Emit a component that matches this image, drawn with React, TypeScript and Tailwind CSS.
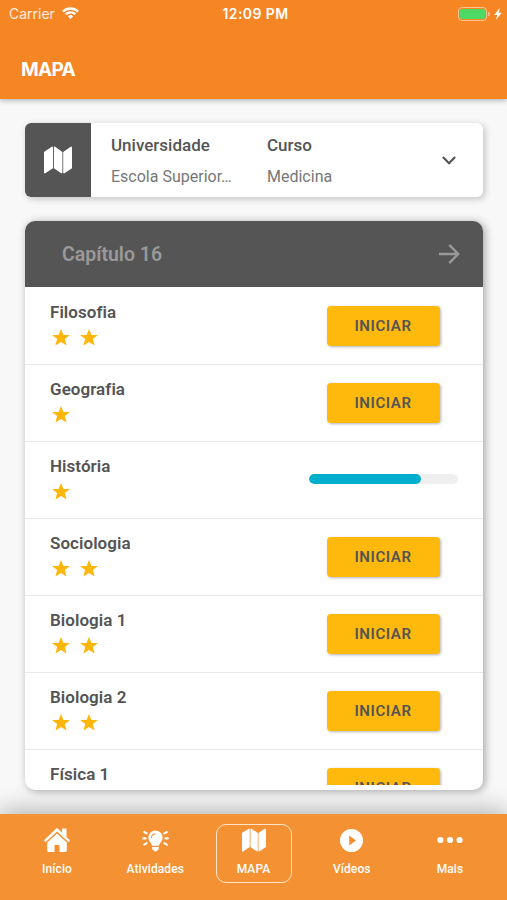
import React, { useState } from 'react';
import clsx from 'clsx';

interface Subject {
  name: string;
  stars: number;
  progress?: number;
}

const subjects: Subject[] = [
  { name: 'Filosofia', stars: 2 },
  { name: 'Geografia', stars: 1 },
  { name: 'História', stars: 1, progress: 75 },
  { name: 'Sociologia', stars: 2 },
  { name: 'Biologia 1', stars: 2 },
  { name: 'Biologia 2', stars: 2 },
  { name: 'Física 1', stars: 2 },
];

type IconProps = { className?: string };

const WifiIcon = ({ className }: IconProps) => (
  <svg viewBox="0 0 17 12" className={className} fill="none" stroke="currentColor" strokeWidth="2.3">
    <path d="M1 4.6a10.6 10.6 0 0 1 15 0" />
    <path d="M3.7 7.3a6.8 6.8 0 0 1 9.6 0" />
    <path d="M8.5 12 5.9 9.4a3.7 3.7 0 0 1 5.2 0z" fill="currentColor" stroke="none" />
  </svg>
);

const BoltIcon = ({ className }: IconProps) => (
  <svg viewBox="0 0 8 12" className={className} fill="currentColor">
    <path d="M5.8 0 0.2 7h3L2 12 7.8 4.8h-3z" />
  </svg>
);

const MapIcon = ({ className }: IconProps) => (
  <svg viewBox="0 0 28 28" className={className} fill="currentColor" stroke="currentColor" strokeWidth="1.6" strokeLinejoin="round">
    <path d="M.8 6.3 8.2 1.4v20.4L.8 26.6z" />
    <path d="m10.7 1.4 6.9 4.9v20.3l-6.9-4.8z" />
    <path d="M20 6.3 27.2 1.4v20.4L20 26.6z" />
  </svg>
);

const StarIcon = ({ className }: IconProps) => (
  <svg viewBox="0 0 18 17" className={className} fill="currentColor">
    <path d="m9 0 2.45 6H18l-5.2 4.1L14.6 16.6 9 13l-5.6 3.6 1.8-6.5L0 6h6.55z" />
  </svg>
);

const HomeIcon = ({ className }: IconProps) => (
  <svg viewBox="0 0 26 24" className={className} fill="currentColor">
    <path d="M13 5.6 3.2 14.6v8c0 .8.5 1.3 1.3 1.3h6v-7h5v7h6c.8 0 1.3-.5 1.3-1.3v-8z" />
    <path d="m25.7 12-3.2-3V1.2c0-.5-.2-.7-.7-.7h-3c-.5 0-.7.2-.7.7v3.6L14.4.9a2 2 0 0 0-2.8 0L.3 12c-.3.2-.3.5-.1.7l.9 1c.2.3.5.3.8 0L13 3.5l11.1 10.2c.3.3.6.3.8 0l.9-1c.2-.2.2-.5-.1-.7z" />
  </svg>
);

const BulbIcon = ({ className }: IconProps) => (
  <svg viewBox="0 0 28 24" className={className}>
    <path
      d="M14 1.6a7.4 7.4 0 0 0-7.4 7.4c0 3.9 3.4 5.4 3.8 8.6h7.2c.4-3.2 3.8-4.7 3.8-8.6A7.4 7.4 0 0 0 14 1.6z"
      fill="currentColor"
    />
    <path d="M10.5 18.7h7v1.7c0 1-.6 1.7-1.5 1.9l-.7 1h-2.6l-.7-1c-.9-.2-1.5-.9-1.5-1.9z" fill="currentColor" />
    <path d="M9.8 8.8a4 4 0 0 1 3.7-3.6" fill="none" stroke="#f49132" strokeWidth="1.2" strokeLinecap="round" />
    <g fill="none" stroke="currentColor" strokeWidth="2.2" strokeLinecap="round">
      <path d="m2.2 3.1 2.6 1.4M1.2 9.8h2.5M2.2 16.3l2.6-1.5M25.8 3.1l-2.6 1.4M26.8 9.8h-2.5M25.8 16.3l-2.6-1.5" />
    </g>
  </svg>
);

const PlayIcon = ({ className }: IconProps) => (
  <svg viewBox="0 0 22 22" className={className} fill="currentColor">
    <path fillRule="evenodd" d="M11 0a11 11 0 1 0 0 22 11 11 0 0 0 0-22zM8.8 6.2v9.6l6.6-4.8z" />
  </svg>
);

const DotsIcon = ({ className }: IconProps) => (
  <svg viewBox="0 0 26 8" className={className} fill="currentColor">
    <circle cx="3.4" cy="4" r="3.1" />
    <circle cx="13" cy="4" r="3.1" />
    <circle cx="22.6" cy="4" r="3.1" />
  </svg>
);

const tabs = [
  { label: 'Início', icon: <HomeIcon className="h-6 w-[26px]" /> },
  { label: 'Atividades', icon: <BulbIcon className="h-[23px] w-[27px]" /> },
  { label: 'MAPA', icon: <MapIcon className="size-6" /> },
  { label: 'Vídeos', icon: <PlayIcon className="size-[23px]" /> },
  { label: 'Mais', icon: <DotsIcon className="h-2 w-[26px]" /> },
];

const StatusBar = () => (
  <div className="grid h-[27px] grid-cols-3 items-center pl-[9px] pr-[5px] font-[Inter] text-[14px] text-white">
    <div className="flex items-center gap-[7px] text-white/85">
      <span>Carrier</span>
      <WifiIcon className="mb-px h-3 w-[17px] text-white" />
    </div>
    <span className="text-center font-semibold tracking-[0.4px] whitespace-nowrap">12:09 PM</span>
    <div className="flex items-center justify-end">
      <div className="h-[14px] w-[29px] rounded-[4px] border border-white/50 p-px">
        <div className="h-full rounded-[2px] bg-[#4cd964]" />
      </div>
      <div className="ml-px h-1 w-[2px] rounded-r bg-white/50" />
      <BoltIcon className="ml-1 h-3 w-2" />
    </div>
  </div>
);

const SubjectRow = ({ subject }: { subject: Subject }) => (
  <li className="flex h-[77px] items-start justify-between border-b border-[#e8e8e8] pl-[25px]">
    <div className="pt-[12px]">
      <h3 className="text-[17px] leading-6 font-semibold tracking-[0.05px]">{subject.name}</h3>
      <div className="mt-[5px] flex gap-[10px] pl-[2px] text-[#ffb60a]">
        {Array.from({ length: subject.stars }, (_, i) => (
          <StarIcon key={i} className="h-[17px] w-[18px]" />
        ))}
      </div>
    </div>
    {subject.progress !== undefined ? (
      <div className="mt-[32px] mr-[25px] h-[10px] w-[149px] overflow-hidden rounded-full bg-[#efefef]">
        <div className="h-full rounded-full bg-[#00aecd]" style={{ width: `${subject.progress}%` }} />
      </div>
    ) : (
      <button className="mt-[18px] mr-[43px] h-10 w-[113px] rounded-[4px] bg-[#ffb90c] pr-px text-[15px] font-semibold tracking-[0.6px] shadow-[1px_1px_3px_rgba(0,0,0,0.3)]">
        INICIAR
      </button>
    )}
  </li>
);

const App: React.FC = () => {
  const [activeTab, setActiveTab] = useState('MAPA');

  return (
    <div className="flex h-[900px] w-[507px] flex-col overflow-hidden bg-[#f8f8f8] font-[Roboto,sans-serif] text-[#545454]">
      <header className="h-[98.5px] shrink-0 bg-[#f68524] shadow-[0_2px_5px_rgba(0,0,0,0.25)]">
        <StatusBar />
        <h1 className="pt-[29px] pl-[21px] font-[Inter] text-[19px] leading-7 font-bold tracking-[-0.7px] text-white">MAPA</h1>
      </header>

      <main className="flex flex-1 flex-col gap-6 pt-[24.5px] pr-6 pb-6 pl-[25px]">
        <section className="flex h-[74px] shrink-0 overflow-hidden rounded-[6px] bg-white shadow-[2px_2px_7px_rgba(0,0,0,0.22)]">
          <div className="flex w-[66px] items-center justify-center bg-[#555] text-white">
            <MapIcon className="size-7" />
          </div>
          <div className="w-[157px] pt-[10px] pl-5">
            <h2 className="text-[17px] leading-[25px] font-medium">Universidade</h2>
            <p className="mt-[6px] text-[16px] leading-[25px] whitespace-nowrap text-[#777]">Escola Superior…</p>
          </div>
          <div className="flex-1 pt-[10px] pl-[19px]">
            <h2 className="text-[17px] leading-[25px] font-medium">Curso</h2>
            <p className="mt-[6px] text-[16px] leading-[25px] text-[#777]">Medicina</p>
          </div>
          <div className="flex items-center pr-[27px]">
            <svg viewBox="0 0 14 9" className="h-[9px] w-[14px]" fill="none" stroke="currentColor" strokeWidth="2.2">
              <path d="m.9 1 6.1 6.2L13.1 1" />
            </svg>
          </div>
        </section>

        <section className="h-[569px] shrink-0 overflow-hidden rounded-[10px] bg-white pb-[5px] shadow-[2px_1px_8px_rgba(0,0,0,0.35)]">
          <div className="flex h-[66px] items-center justify-between bg-[#555] pr-[23px] pl-[37px] text-[#999]">
            <h2 className="pt-px text-[19.5px] font-semibold">Capítulo 16</h2>
            <svg viewBox="0 0 21 20" className="h-5 w-[21px]" fill="none" stroke="currentColor" strokeWidth="2.3">
              <path d="M0 10h19M10.2.9l9.1 9.1-9.1 9.1" />
            </svg>
          </div>
          <ul className="h-[498px] overflow-hidden pt-px">
            {subjects.map(subject => (
              <SubjectRow key={subject.name} subject={subject} />
            ))}
          </ul>
        </section>
      </main>

      <nav className="flex h-[86px] shrink-0 justify-between bg-[#f49132] px-[19px] pt-[10px] text-white shadow-[0_-3px_24px_rgba(0,0,0,0.3)]">
        {tabs.map(tab => (
          <button
            key={tab.label}
            onClick={() => setActiveTab(tab.label)}
            className={clsx(
              'flex h-[59px] w-[76px] flex-col items-center rounded-[10px] border-[1.5px]',
              activeTab === tab.label ? 'border-white/75' : 'border-transparent'
            )}
          >
            <span className="mt-[3px] flex h-6 items-center justify-center">{tab.icon}</span>
            <span className="mt-[9px] text-[12px] leading-4 font-medium tracking-[0.1px]">{tab.label}</span>
          </button>
        ))}
      </nav>
    </div>
  );
};

export default App;
